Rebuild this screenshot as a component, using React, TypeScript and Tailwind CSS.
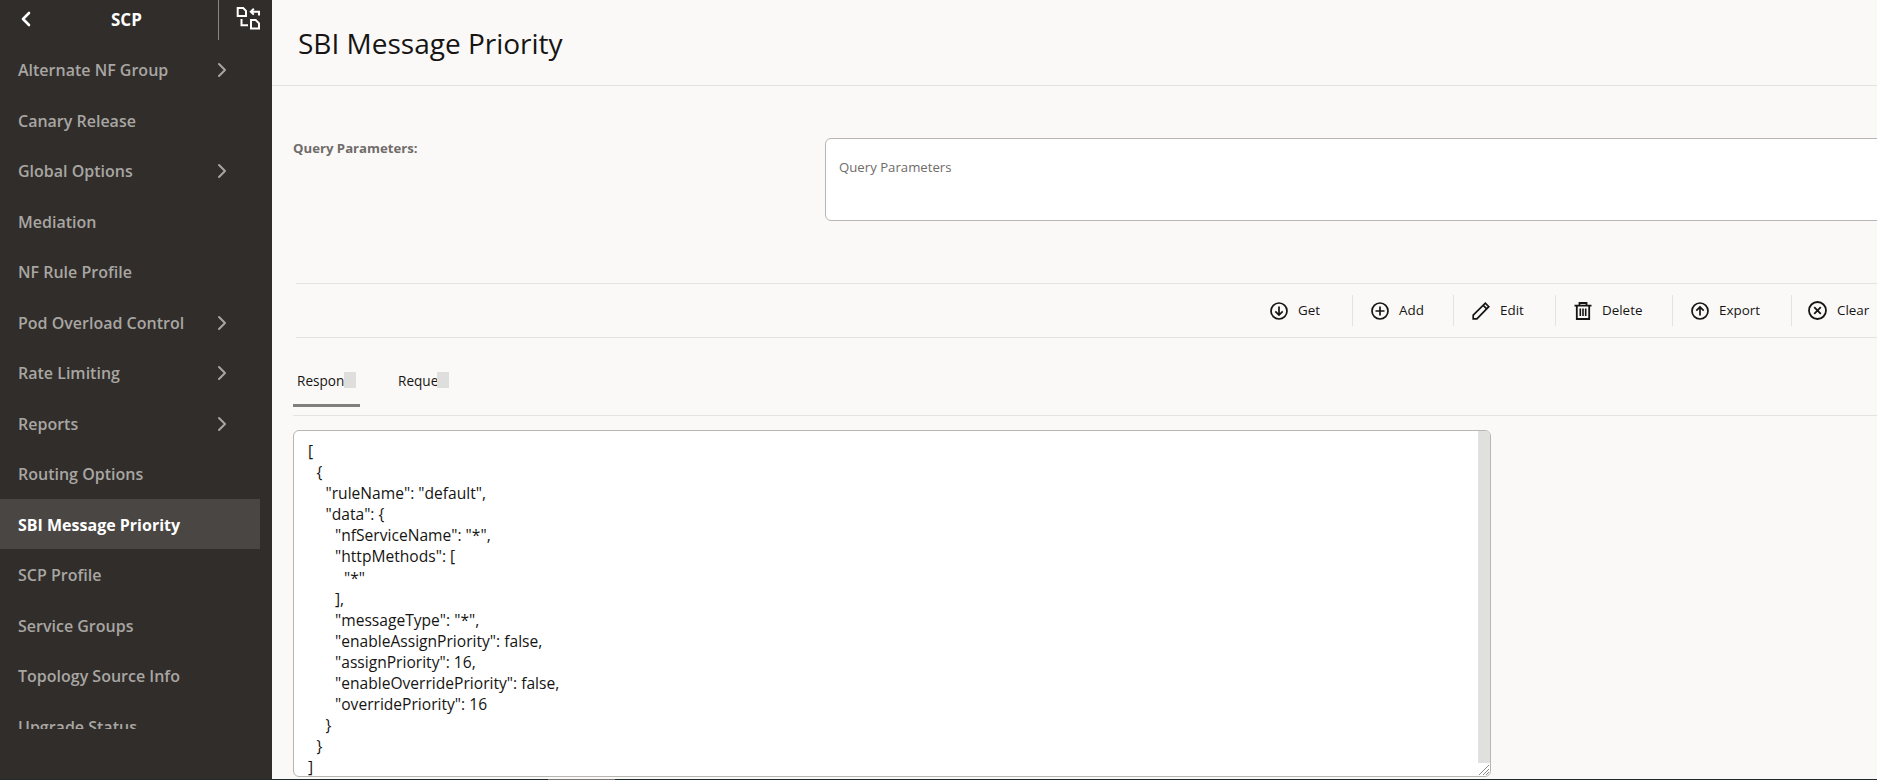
import { ChevronLeft, ChevronRight } from "lucide-react";

const navItems = [
  { label: "Alternate NF Group", arrow: true },
  { label: "Canary Release" },
  { label: "Global Options", arrow: true },
  { label: "Mediation" },
  { label: "NF Rule Profile" },
  { label: "Pod Overload Control", arrow: true },
  { label: "Rate Limiting", arrow: true },
  { label: "Reports", arrow: true },
  { label: "Routing Options" },
  { label: "SBI Message Priority", active: true },
  { label: "SCP Profile" },
  { label: "Service Groups" },
  { label: "Topology Source Info" },
  { label: "Upgrade Status" },
];

const indents = ["pl-0", "pl-[8.5px]", "pl-[17.5px]", "pl-[27px]", "pl-[36px]"];

const jsonLines: [number, string][] = [
  [0, "["],
  [1, "{"],
  [2, '"ruleName": "default",'],
  [2, '"data": {'],
  [3, '"nfServiceName": "*",'],
  [3, '"httpMethods": ['],
  [4, '"*"'],
  [3, "],"],
  [3, '"messageType": "*",'],
  [3, '"enableAssignPriority": false,'],
  [3, '"assignPriority": 16,'],
  [3, '"enableOverridePriority": false,'],
  [3, '"overridePriority": 16'],
  [2, "}"],
  [1, "}"],
  [0, "]"],
];

const GetIcon = () => (
  <svg width="18" height="18" viewBox="0 0 18 18" fill="none" stroke="#161513" strokeWidth="1.7">
    <circle cx="9" cy="9" r="8" />
    <path d="M9 4.5v8.5M5.3 9.3L9 13l3.7-3.7" />
  </svg>
);

const AddIcon = () => (
  <svg width="18" height="18" viewBox="0 0 18 18" fill="none" stroke="#161513" strokeWidth="1.7">
    <circle cx="9" cy="9" r="8" />
    <path d="M9 4.5v9M4.5 9h9" />
  </svg>
);

const EditIcon = () => (
  <svg width="18" height="18" viewBox="0 0 18 18" fill="none" stroke="#161513" strokeWidth="1.7">
    <path d="M1.2 16.8v-3.7L13.3 1.2l3.5 3.5L4.9 16.8z" />
    <path d="M11.2 3.3l3.5 3.5" />
  </svg>
);

const DeleteIcon = () => (
  <svg width="18" height="18" viewBox="0 0 18 18" fill="none" stroke="#161513" strokeWidth="1.8">
    <path d="M0.5 3.6h17M5.5 3.6V1h7v2.6M2.8 3.6V17h12.4V3.6" />
    <path d="M6.3 6.5v7.5M9 6.5v7.5M11.7 6.5v7.5" strokeWidth="1.6" />
  </svg>
);

const ExportIcon = () => (
  <svg width="18" height="18" viewBox="0 0 18 18" fill="none" stroke="#161513" strokeWidth="1.7">
    <circle cx="9" cy="9" r="8" />
    <path d="M9 13.5V5M5.3 8.7L9 5l3.7 3.7" />
  </svg>
);

const ClearIcon = () => (
  <svg width="19" height="19" viewBox="0 0 19 19" fill="none" stroke="#161513" strokeWidth="1.8">
    <circle cx="9.5" cy="9.5" r="8.5" />
    <path d="M6.2 6.2l6.6 6.6M12.8 6.2l-6.6 6.6" />
  </svg>
);

const SwitchIcon = () => (
  <svg width="25" height="24" viewBox="0 0 25 24" fill="none" stroke="#ffffff" strokeWidth="2">
    <path d="M1.7 2h5.5L10 4.8v5.2H1.7z" />
    <path d="M23 9.5V5.7H15M17.8 2.8L14.8 5.7l3 2.9" />
    <path d="M5.5 13v6.2H12" />
    <path d="M15 14h4.7L23 17.3V22.5H15z" />
  </svg>
);

const actions = [
  { label: "Get", icon: <GetIcon />, w: "w-[100px]", pl: "pl-[18px]" },
  { label: "Add", icon: <AddIcon />, w: "w-[101px]", pl: "pl-[18px]" },
  { label: "Edit", icon: <EditIcon />, w: "w-[102px]", pl: "pl-[18px]" },
  { label: "Delete", icon: <DeleteIcon />, w: "w-[117px]", pl: "pl-[18px]" },
  { label: "Export", icon: <ExportIcon />, w: "w-[119px]", pl: "pl-[18px]" },
  { label: "Clear", icon: <ClearIcon />, w: "w-[86px]", pl: "pl-[16px]" },
];

export default function App() {
  return (
    <div className="flex h-[780px] w-full flex-col overflow-hidden bg-[#fbf9f8] font-['Open_Sans',sans-serif] text-[#161513]">
      <div className="flex h-[779px] w-full overflow-hidden">
        {/* Sidebar */}
        <aside className="flex h-full w-[272px] shrink-0 flex-col bg-[#312d2a]">
          <div className="flex h-[40px] shrink-0 items-start">
            <div className="flex h-full w-[219px] items-center border-r border-[#8b8885] pb-[3px] pl-[14px]">
              <ChevronLeft size={24} strokeWidth={2.6} className="text-white" />
              <span className="ml-[73px] pt-[2px] text-[17px] font-bold text-white">SCP</span>
            </div>
            <div className="ml-[17px] pt-[6px]">
              <SwitchIcon />
            </div>
          </div>
          <nav className="mt-[4px] h-[685px] overflow-hidden">
            {navItems.map((item) => (
              <div
                key={item.label}
                className={`flex h-[50.52px] w-[260px] items-center justify-between pl-[18px] pr-[26px] pt-[2px] text-[16px] ${
                  item.active ? "bg-[#4a4643] font-bold text-white" : "font-semibold text-[#a8a6a3]"
                }`}
              >
                <span>{item.label}</span>
                {item.arrow && <ChevronRight size={24} strokeWidth={2} />}
              </div>
            ))}
          </nav>
        </aside>

        {/* Main content */}
        <main className="flex min-w-0 flex-1 flex-col">
          <h1 className="flex h-[86px] shrink-0 items-center border-b border-[#e5e3e0] pl-[26px] pt-[1px] text-[28px] font-normal">
            SBI Message Priority
          </h1>

          <div className="flex h-[197px] shrink-0 pl-[21px] pt-[52px]">
            <label className="w-[532px] shrink-0 pt-[1px] text-[13.2px] font-bold text-[#6f6c69]">Query Parameters:</label>
            <div className="h-[83px] w-[1100px] shrink-0 rounded-md border border-[#b8b6b3] bg-white pl-[13px] pt-[19px] text-[13.2px] text-[#6f6c69]">
              Query Parameters
            </div>
          </div>

          <div className="ml-[24px] flex h-[55px] shrink-0 items-center justify-end border-y border-[#e5e3e0]">
            {actions.map((a, i) => (
              <div
                key={a.label}
                className={`flex h-[31px] items-center gap-[10px] text-[13.4px] font-medium ${a.w} ${a.pl} ${
                  i > 0 ? "border-l border-[#e5e3e0]" : ""
                }`}
              >
                {a.icon}
                <span>{a.label}</span>
              </div>
            ))}
          </div>

          <div className="ml-[21px] flex h-[78px] shrink-0 gap-[38px] border-b border-[#e5e3e0]">
            <div className="flex h-[69px] w-[67px] items-start border-b-[3px] border-[#817f7c] pl-[4px] pt-[34px] text-[13.6px] font-medium leading-[18px]">
              <span className="w-[47px] overflow-hidden whitespace-nowrap">Response</span>
              <span className="h-[16px] w-[12px] shrink-0 bg-[#dededc]" />
            </div>
            <div className="flex h-[69px] items-start pt-[34px] text-[13.6px] font-medium leading-[18px]">
              <span className="w-[39px] overflow-hidden whitespace-nowrap">Request</span>
              <span className="h-[16px] w-[12px] shrink-0 bg-[#dededc]" />
            </div>
          </div>

          <div className="relative ml-[21px] mt-[14px] flex h-[347px] w-[1198px] shrink-0 overflow-hidden rounded-md border border-[#b8b6b3] bg-white">
            <div className="flex-1 overflow-hidden pl-[14px] pt-[10px] text-[15.6px] leading-[21.1px] whitespace-pre">
              {jsonLines.map(([level, text], i) => (
                <div key={i} className={indents[level]}>
                  {text}
                </div>
              ))}
            </div>
            <div className="mb-[13px] w-[12px] shrink-0 bg-[#e0e0de]" />
            <svg className="absolute bottom-0 right-0" width="12" height="12" viewBox="0 0 12 12" stroke="#8b8885" strokeWidth="1">
              <path d="M1 11L11 1M5 11l6-6M8 11l3-3" />
            </svg>
          </div>
        </main>
      </div>

      {/* Strip of the window below the page */}
      <div className="flex h-[1px] w-full shrink-0 bg-[#1d2b2b]">
        <div className="ml-[548px] w-[67px] bg-[#777777]" />
      </div>
    </div>
  );
}
